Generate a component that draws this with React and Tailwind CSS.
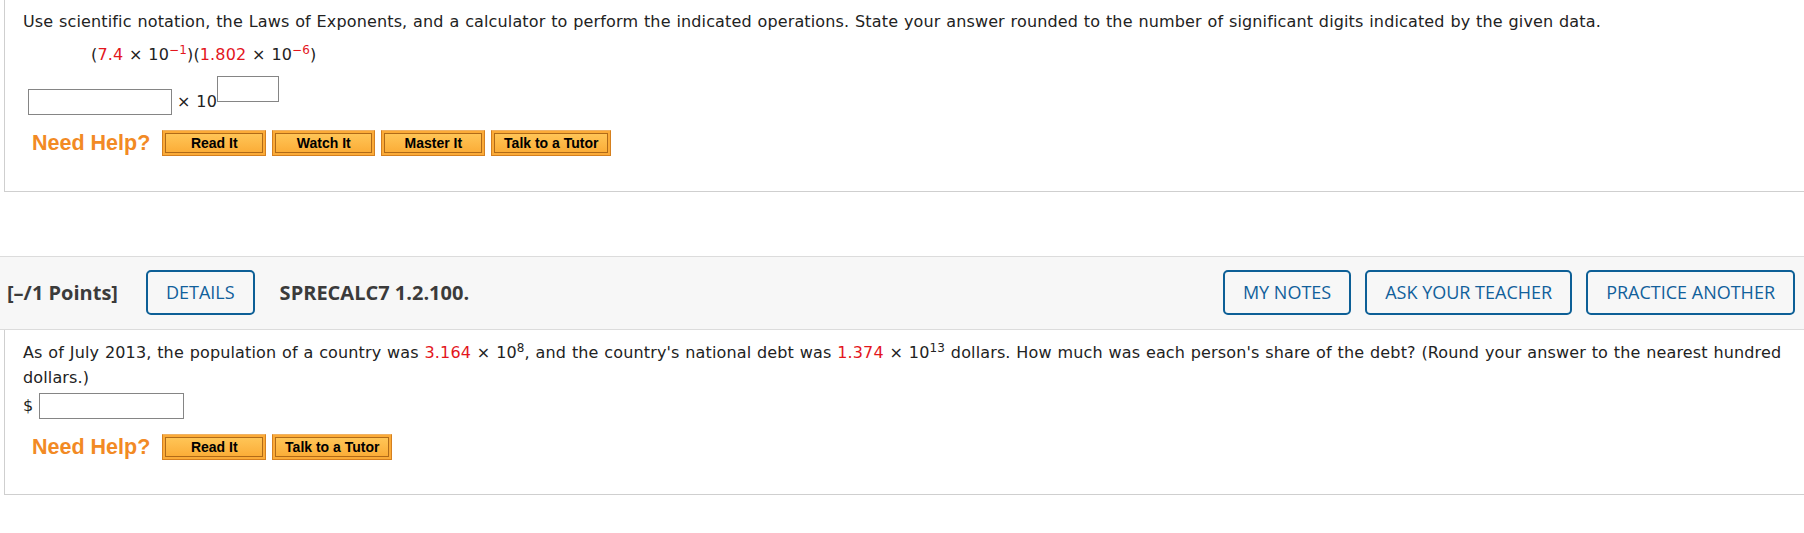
import React from 'react'

const RED = 'text-[#e3161d]'
const BODY = "font-['DejaVu_Sans',Verdana,sans-serif] text-[16px] text-[#222] tracking-[0.14px] [word-spacing:0.55px]"

function HelpButton({ label, w }) {
  return (
    <button className={`h-[26px] ${w} border border-[#d5801f] border-t-[#f0b263] bg-[#fbab38] p-[2px]`}>
      <span className="flex h-full items-center justify-center border border-[#b06a18] bg-linear-to-b from-[#ffc556] to-[#fbad37] font-['Liberation_Sans',Arial,sans-serif] text-[14px] font-bold leading-none tracking-normal text-black [word-spacing:normal]">
        {label}
      </span>
    </button>
  )
}

function NeedHelp({ buttons }) {
  return (
    <div className="flex h-[26px] items-center">
      <span className="ml-[9px] mr-[12px] font-['Liberation_Sans',Arial,sans-serif] text-[21.5px] font-bold tracking-normal text-[#f28a24] [word-spacing:normal]">
        Need Help?
      </span>
      <div className="flex gap-[6px]">
        {buttons.map(([label, w]) => (
          <HelpButton key={label} label={label} w={w} />
        ))}
      </div>
    </div>
  )
}

function OutlineButton({ children, className = '' }) {
  return (
    <button className={`h-[45px] rounded-[5px] border-2 border-[#0d5f96] px-[18px] font-['Open_Sans',sans-serif] text-[18px] text-[#11609b] ${className}`}>
      {children}
    </button>
  )
}

export default function App() {
  return (
    <div className="h-[533px] w-[1804px] overflow-hidden bg-white">
      {/* previous question */}
      <div className={`ml-[4px] border-b border-l border-[#cfcfcf] pb-[35px] pl-[18px] pt-[9.5px] ${BODY}`}>
        <p className="leading-[24px]">
          Use scientific notation, the Laws of Exponents, and a calculator to perform the indicated operations. State your answer rounded to the number of significant digits indicated by the given data.
        </p>
        <p className="mt-[9px] pl-[68px] leading-[24px]">
          (<span className={RED}>7.4</span> × 10<sup className={RED}>−1</sup>)(<span className={RED}>1.802</span> × 10<sup className={RED}>−6</sup>)
        </p>
        <div className="mt-[9.5px] flex items-start">
          <input className="ml-[5px] mt-[13px] h-[26px] w-[144px] border border-[#858585] bg-white" />
          <span className="ml-[5px] mt-[13.5px] leading-[24px]">× 10</span>
          <input className="h-[26px] w-[62px] border border-[#858585] bg-white" />
        </div>
        <div className="mt-[15px]">
          <NeedHelp
            buttons={[
              ['Read It', 'w-[104px]'],
              ['Watch It', 'w-[103px]'],
              ['Master It', 'w-[104px]'],
              ['Talk to a Tutor', 'w-[120px]'],
            ]}
          />
        </div>
      </div>

      {/* question header */}
      <div className="mt-[64px] flex items-center border-y border-[#dcdcdc] bg-[#f7f7f7] pb-[14px] pl-[7px] pr-[9px] pt-[13px] font-['Open_Sans',sans-serif]">
        <span className="text-[20px] font-bold text-[#3b3b3b]">[–/1 Points]</span>
        <OutlineButton className="ml-[28px]">DETAILS</OutlineButton>
        <span className="ml-[25px] text-[20px] font-bold text-[#3b3b3b]">SPRECALC7 1.2.100.</span>
        <div className="ml-auto flex gap-[14px]">
          <OutlineButton>MY NOTES</OutlineButton>
          <OutlineButton>ASK YOUR TEACHER</OutlineButton>
          <OutlineButton>PRACTICE ANOTHER</OutlineButton>
        </div>
      </div>

      {/* question body */}
      <div className={`ml-[4px] border-b border-l border-[#cfcfcf] pb-[34px] pl-[18px] pr-[14px] pt-[9.5px] ${BODY}`}>
        <p className="leading-[25px]">
          As of July 2013, the population of a country was <span className={RED}>3.164</span> × 10<sup>8</sup>, and the country's national debt was <span className={RED}>1.374</span> × 10<sup>13</sup> dollars. How much was each person's share of the debt? (Round your answer to the nearest hundred dollars.)
        </p>
        <div className="mt-[3.5px] flex h-[26px] items-center">
          <span className="leading-[24px]">$</span>
          <input className="ml-[6px] h-[26px] w-[145px] border border-[#858585] bg-white" />
        </div>
        <div className="mt-[15px]">
          <NeedHelp
            buttons={[
              ['Read It', 'w-[104px]'],
              ['Talk to a Tutor', 'w-[120px]'],
            ]}
          />
        </div>
      </div>
    </div>
  )
}
